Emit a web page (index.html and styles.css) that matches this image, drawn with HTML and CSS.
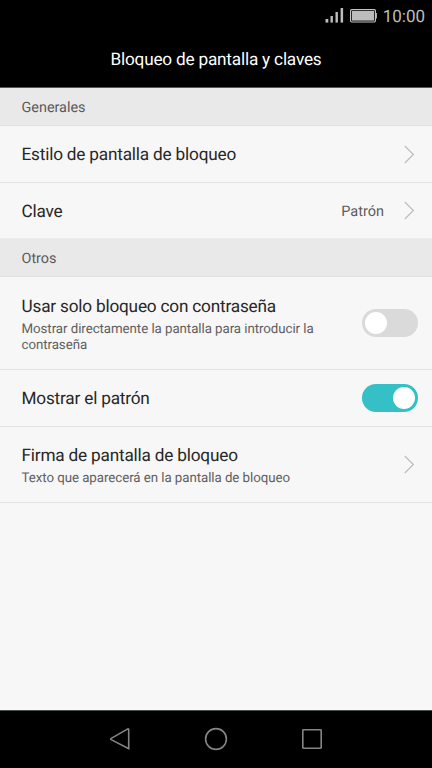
FILE: index.html
```html
<!DOCTYPE html>
<html lang="es">
<head>
<meta charset="utf-8">
<title>Bloqueo de pantalla y claves</title>
<link rel="stylesheet" href="styles.css">
</head>
<body>
<header class="top">
  <div class="status">
    <svg class="signal" width="19" height="16" viewBox="0 0 19 16" fill="#bdbdbd"><rect x="0.5" y="11" width="2.8" height="3.6"/><rect x="5.5" y="8" width="2.4" height="6.6"/><rect x="10.5" y="4" width="2.4" height="10.6"/><rect x="15.6" y="0" width="2.5" height="14.6"/></svg>
    <svg class="battery" width="27" height="14" viewBox="0 0 27 14"><rect x=".6" y=".6" width="24.8" height="12.4" rx="1.2" fill="none" stroke="#c4c4c4" stroke-width="1.2"/><rect x="2" y="2" width="22" height="9.6" fill="#bdbdbd"/><path d="M25.7 4h1.2v5.6h-1.2z" fill="#bdbdbd"/></svg>
    <span class="clock">10:00</span>
  </div>
  <h1 class="title">Bloqueo de pantalla y claves</h1>
</header>
<main class="settings">
  <h2 class="section">Generales</h2>
  <div class="row">
    <div class="text label">Estilo de pantalla de bloqueo</div>
    <svg class="chevron" width="11" height="19" viewBox="0 0 11 19"><path d="M.8 1l8.6 8.5L.8 18"/></svg>
  </div>
  <div class="row row-last">
    <div class="label label-short">Clave</div>
    <span class="value">Patrón</span>
    <svg class="chevron" width="11" height="19" viewBox="0 0 11 19"><path d="M.8 1l8.6 8.5L.8 18"/></svg>
  </div>
  <h2 class="section">Otros</h2>
  <div class="row row-tall">
    <div class="text text-stacked">
      <div class="label">Usar solo bloqueo con contraseña</div>
      <div class="hint">Mostrar directamente la pantalla para introducir la contraseña</div>
    </div>
    <div class="switch"><span class="knob"></span></div>
  </div>
  <div class="row">
    <div class="text label">Mostrar el patrón</div>
    <div class="switch switch-on"><span class="knob"></span></div>
  </div>
  <div class="row row-medium">
    <div class="text text-stacked">
      <div class="label">Firma de pantalla de bloqueo</div>
      <div class="hint">Texto que aparecerá en la pantalla de bloqueo</div>
    </div>
    <svg class="chevron" width="11" height="19" viewBox="0 0 11 19"><path d="M.8 1l8.6 8.5L.8 18"/></svg>
  </div>
</main>
<nav class="nav">
  <svg width="24" height="24" viewBox="0 0 24 24"><path d="M20.7 2.2v19.6L3.2 12.6q-1-.6 0-1.2L19.4 2.1q1.3-.6 1.3.6"/></svg>
  <svg width="24" height="24" viewBox="0 0 24 24"><circle cx="12" cy="12" r="10.4"/></svg>
  <svg width="24" height="24" viewBox="0 0 24 24"><rect x="2.8" y="2.8" width="18.4" height="18.4" rx=".6"/></svg>
</nav>
</body>
</html>
```

FILE: styles.css
```css
* { box-sizing: border-box; }

body {
  margin: 0;
  height: 768px;
  display: flex;
  flex-direction: column;
  overflow: hidden;
  background: #f7f7f7;
  color: #272727;
  font-family: Roboto, "Liberation Sans", sans-serif;
  text-rendering: geometricPrecision;
}

.top {
  height: 88px;
  background: #000;
  border-bottom: 1px solid #5a5558;
}

.status {
  height: 32px;
  display: flex;
  align-items: center;
  justify-content: flex-end;
  padding-right: 7px;
}

.signal { margin-right: 6px; }
.battery { margin-right: 6px; }

.clock {
  padding-top: 2px;
  font-size: 17px;
  line-height: 30px;
  color: #bdbdbd;
}

.title {
  margin: 0;
  font-size: 17.2px;
  font-weight: 400;
  letter-spacing: -0.2px;
  line-height: 57px;
  text-align: center;
  color: #fff;
}

.settings { flex: 1; }

.section {
  margin: 0;
  height: 38px;
  padding-left: 21.5px;
  background: #e9e9e9;
  border-bottom: 1px solid #dfdfdf;
  color: #595959;
  font-size: 14.4px;
  font-weight: 400;
  line-height: 40px;
}

.row {
  height: 57px;
  display: flex;
  align-items: center;
  padding: 0 14px 0 21.5px;
  border-bottom: 1px solid #e3e3e3;
}

.row-last {
  height: 56px;
  border-bottom-color: #ececec;
}

.row-tall { height: 93px; }
.row-medium { height: 76px; }

.text {
  width: 310px;
  padding-top: 2px;
}

.text-stacked { padding-top: 3px; }

.label {
  font-size: 17.2px;
  letter-spacing: -0.19px;
  line-height: 22px;
  white-space: nowrap;
}

.label-short { padding-top: 2px; }

.hint {
  margin-top: 4px;
  color: #606060;
  font-size: 13.3px;
  letter-spacing: -0.06px;
  line-height: 16px;
}

.value {
  margin-left: auto;
  margin-right: 20px;
  padding-top: 2px;
  color: #5c5c5c;
  font-size: 14.5px;
}

.chevron {
  flex: none;
  margin-left: auto;
  margin-right: 3px;
  fill: none;
  stroke: #bababa;
  stroke-width: 1.1;
}

.value + .chevron { margin-left: 0; }

.switch {
  flex: none;
  display: flex;
  width: 56px;
  height: 28px;
  margin-left: auto;
  padding: 3px;
  border-radius: 14px;
  background: #dadada;
}

.switch-on {
  justify-content: flex-end;
  background: #34c0c6;
}

.knob {
  width: 22px;
  height: 22px;
  border-radius: 50%;
  background: #fff;
}

.nav {
  height: 58px;
  display: flex;
  align-items: center;
  justify-content: center;
  gap: 72px;
  padding-bottom: 1px;
  background: #000;
  border-top: 1px solid #4b5350;
}

.nav svg {
  fill: none;
  stroke: #858585;
  stroke-width: 1.6;
}
```
